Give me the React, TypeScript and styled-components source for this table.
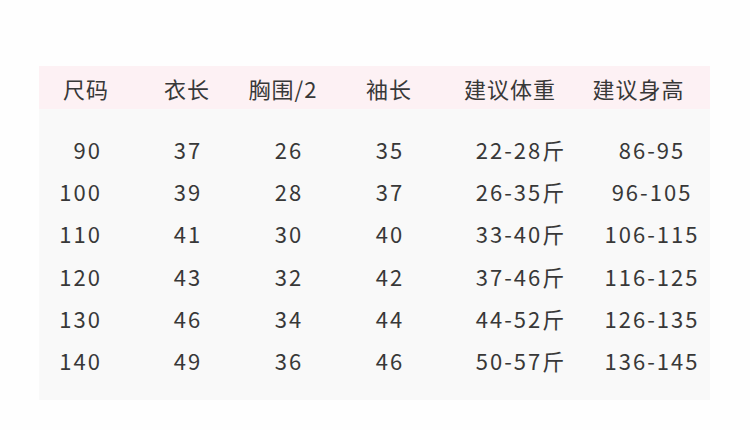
import styled, { createGlobalStyle } from "styled-components";

const GlobalStyle = createGlobalStyle`
  html, body {
    margin: 0;
    padding: 0;
    background: #fefefe;
  }
`;

const header = ["尺码", "衣长", "胸围/2", "袖长", "建议体重", "建议身高"];

const rows = [
  ["90", "37", "26", "35", "22-28斤", "86-95"],
  ["100", "39", "28", "37", "26-35斤", "96-105"],
  ["110", "41", "30", "40", "33-40斤", "106-115"],
  ["120", "43", "32", "42", "37-46斤", "116-125"],
  ["130", "46", "34", "44", "44-52斤", "126-135"],
  ["140", "49", "36", "46", "50-57斤", "136-145"],
];

export default function App() {
  return (
    <>
      <GlobalStyle />
      <Page>
        <Table>
          <HeadRow>
            {header.map((h) => (
              <HeadCell key={h}>{h}</HeadCell>
            ))}
          </HeadRow>
          <Body>
            {rows.map((r) => (
              <Row key={r[0]}>
                {r.map((v, i) => (
                  <Cell key={i} $first={i === 0}>
                    {v}
                  </Cell>
                ))}
              </Row>
            ))}
          </Body>
        </Table>
      </Page>
    </>
  );
}

const Page = styled.div`
  width: 750px;
  height: 430px;
  padding: 66px 40px 30px 39px;
  box-sizing: border-box;
  font-family: "Noto Sans CJK SC", "Noto Sans", sans-serif;
  color: #383838;
`;

const Table = styled.div`
  width: 671px;
  height: 334px;
  display: flex;
  flex-direction: column;
  background: #f9f9f9;
`;

const HeadRow = styled.div`
  height: 43px;
  display: grid;
  grid-template-columns: 94px 108px 84px 128px 114px 1fr;
  align-items: center;
  background: #fdf1f4;
`;

const HeadCell = styled.div`
  text-align: center;
  font-size: 22px;
  letter-spacing: 1px;
  line-height: 42px;
  white-space: nowrap;
`;

const Body = styled.div`
  padding-top: 19px;
  display: flex;
  flex-direction: column;
`;

const Row = styled.div`
  height: 42.2px;
  display: grid;
  grid-template-columns: 100px 98px 104px 98px 164px 98px;
  align-items: center;
`;

const Cell = styled.div<{ $first?: boolean }>`
  text-align: ${(p) => (p.$first ? "right" : "center")};
  padding-right: ${(p) => (p.$first ? "37px" : "0")};
  font-size: 22px;
  letter-spacing: 2px;
  white-space: nowrap;
  line-height: 42px;
`;
